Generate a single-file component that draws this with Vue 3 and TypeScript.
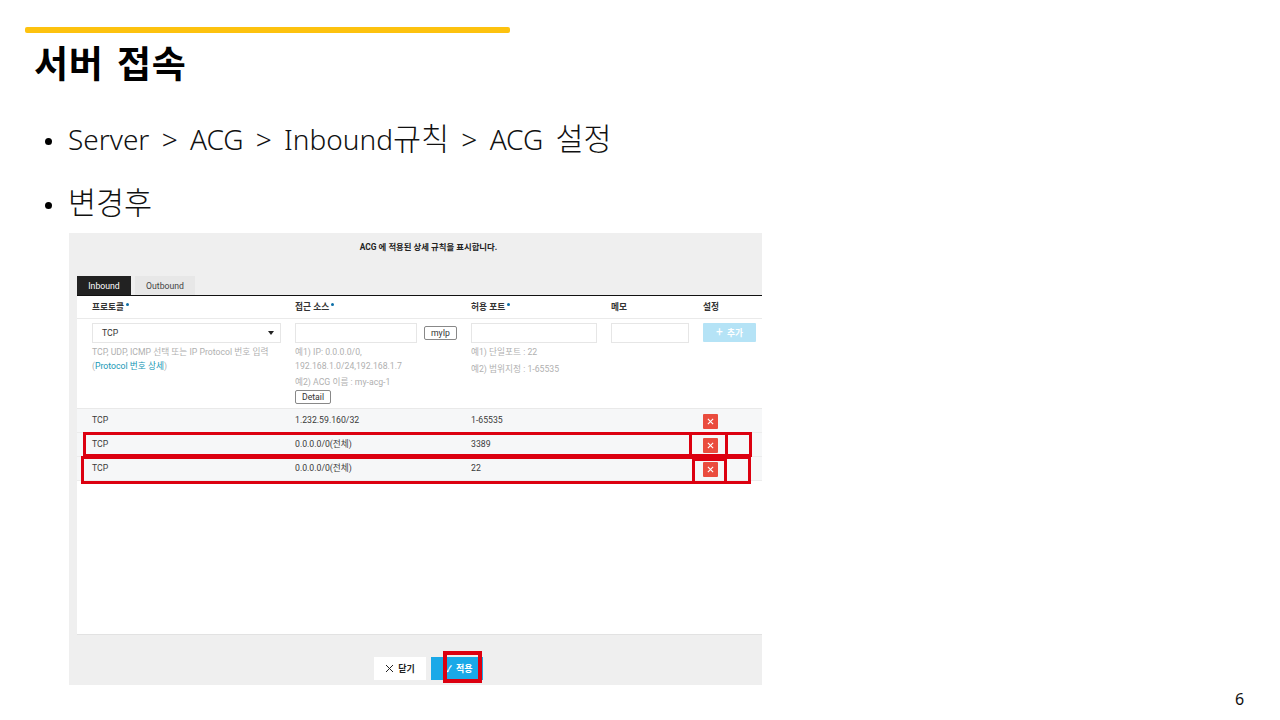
<script setup lang="ts">
interface Rule { proto: string; source: string; port: string }
const rules: Rule[] = [
  { proto: 'TCP', source: '1.232.59.160/32', port: '1-65535' },
  { proto: 'TCP', source: '0.0.0.0/0(전체)', port: '3389' },
  { proto: 'TCP', source: '0.0.0.0/0(전체)', port: '22' },
]
const marks = ['m1', 'm2', 'm3', 'm4', 'm5']
</script>

<template>
  <div class="slide">
    <div class="bar"></div>
    <h1 class="title">서버 접속</h1>
    <ul class="bullets">
      <li>Server &gt; ACG &gt; Inbound<span class="ko">규칙</span> &gt; ACG <span class="ko">설정</span></li>
      <li><span class="ko">변경후</span></li>
    </ul>
    <div class="shot">
      <div class="shot-head">ACG 에 적용된 상세 규칙을 표시합니다.</div>
      <div class="tabs">
        <div class="tab active">Inbound</div>
        <div class="tab">Outbound</div>
      </div>
      <div class="sheet">
        <div class="grid head-row">
          <div>프로토콜<i class="dot"></i></div>
          <div>접근 소스<i class="dot"></i></div>
          <div>허용 포트<i class="dot"></i></div>
          <div>메모</div>
          <div>설정</div>
        </div>
        <div class="grid form-row">
          <div>
            <div class="field select w188"><span>TCP</span><i class="caret"></i></div>
            <p class="hint first">TCP, UDP, ICMP 선택 또는 IP Protocol 번호 입력</p>
            <p class="hint">(<span class="link">Protocol 번호 상세</span>)</p>
          </div>
          <div>
            <div class="src-line">
              <div class="field w122"></div>
              <div class="mini">myIp</div>
            </div>
            <p class="hint first">예1) IP: 0.0.0.0/0,</p>
            <p class="hint">192.168.1.0/24,192.168.1.7</p>
            <p class="hint gap">예2) ACG 이름 : my-acg-1</p>
            <div class="mini detail">Detail</div>
          </div>
          <div>
            <div class="field w126"></div>
            <p class="hint first">예1) 단일포트 : 22</p>
            <p class="hint wide">예2) 범위지정 : 1-65535</p>
          </div>
          <div><div class="field w78"></div></div>
          <div><div class="add"><span class="plus">+</span> 추가</div></div>
        </div>
        <div v-for="(r, i) in rules" :key="i" class="grid rule-row">
          <div>{{ r.proto }}</div>
          <div>{{ r.source }}</div>
          <div>{{ r.port }}</div>
          <div></div>
          <div>
            <span class="del">
              <svg viewBox="0 0 8 8" width="7" height="7"><path d="M1 1l6 6M7 1l-6 6" stroke="#fff" stroke-width="1.3" fill="none" /></svg>
            </span>
          </div>
        </div>
      </div>
      <div class="foot">
        <div class="btn close">
          <svg viewBox="0 0 9 9" width="9" height="9"><path d="M1 1l7 7M8 1l-7 7" stroke="#222" stroke-width="1" fill="none" /></svg>
          닫기
        </div>
        <div class="btn apply">✓ 적용</div>
      </div>
      <div v-for="m in marks" :key="m" class="mark" :class="m"></div>
    </div>
    <div class="page">6</div>
  </div>
</template>

<style>
html, body { margin: 0; background: #fff; }
</style>

<style scoped>
.slide {
  width: 1280px;
  height: 720px;
  box-sizing: border-box;
  padding: 27px 0 0 25px;
  background: #fff;
  position: relative;
  overflow: hidden;
  font-family: "Noto Sans", "Noto Sans CJK KR", sans-serif;
  color: #000;
}
.bar { width: 485px; height: 6px; background: #fdc20f; border-radius: 2px; }
.title {
  margin: 4px 0 0 9px;
  font: 700 37px/50px "Noto Sans CJK KR", sans-serif;
  letter-spacing: 0.8px;
  word-spacing: 4px;
}
.bullets { list-style: none; margin: 31px 0 0 19px; padding: 0; }
.bullets li {
  position: relative;
  padding-left: 24px;
  font-size: 28px;
  line-height: 40px;
  height: 64px;
  word-spacing: 5px;
  font-weight: 300;
  color: #111;
}
.ko { font-size: 30.5px; word-spacing: 0; }
.bullets li::before {
  content: "";
  position: absolute;
  left: 1px;
  top: 20px;
  width: 7px;
  height: 7px;
  border-radius: 50%;
  background: #000;
}

.shot {
  position: absolute;
  left: 69px;
  top: 233px;
  width: 693px;
  height: 452px;
  background: #efefef;
  font-family: Roboto, "Noto Sans CJK KR", sans-serif;
  font-size: 8.7px;
  color: #3a3a3a;
  display: flex;
  flex-direction: column;
}
.shot-head {
  text-align: center;
  font-weight: 700;
  font-size: 8.4px;
  line-height: 12px;
  padding: 8px 0 0 26px;
  height: 35px;
  color: #222;
}
.tabs { display: flex; gap: 4px; padding-left: 8px; height: 19px; }
.tab {
  width: 60px;
  height: 19px;
  background: #e7e7e7;
  text-align: center;
  line-height: 20px;
  color: #444;
}
.tab.active { width: 54px; background: #222; color: #fff; }
.sheet {
  margin-left: 8px;
  height: 338px;
  background: #fff;
  border-top: 1px solid #111;
  border-bottom: 1px solid #e2e2e2;
}
.grid { display: grid; grid-template-columns: 218px 176px 140px 92px 59px; }
.grid > div:first-child { padding-left: 15px; }
.head-row {
  height: 22px;
  line-height: 22px;
  font-weight: 700;
  color: #333;
  border-bottom: 1px solid #eaeaea;
}
.dot {
  display: inline-block;
  width: 3px;
  height: 3px;
  margin: 0 0 6px 2px;
  border-radius: 50%;
  background: #0b6fa8;
  vertical-align: middle;
}
.form-row { padding-top: 4px; height: 85px; border-bottom: 1px solid #e9e9e9; }
.field {
  box-sizing: border-box;
  height: 20px;
  background: #fff;
  border: 1px solid #e6e6e6;
}
.w188 { width: 189px; }
.w122 { width: 122px; }
.w126 { width: 126px; }
.w78 { width: 78px; }
.select {
  display: flex;
  align-items: center;
  justify-content: space-between;
  padding: 0 6px 0 9px;
  color: #333;
}
.caret {
  width: 0;
  height: 0;
  border-left: 3px solid transparent;
  border-right: 3px solid transparent;
  border-top: 4px solid #222;
}
.src-line { display: flex; gap: 7px; align-items: center; height: 20px; }
.mini {
  box-sizing: border-box;
  width: 33px;
  height: 14px;
  border: 1px solid #888;
  border-radius: 2px;
  background: #fff;
  text-align: center;
  line-height: 12px;
  color: #333;
}
.detail { width: 36px; }
.hint { margin: 0; line-height: 13.5px; color: #b0b0b0; white-space: nowrap; }
.hint.first { margin-top: 3px; }
.hint.gap { margin-top: 3px; }
.hint.wide { margin-top: 3px; }
.link { color: #1597b5; font-weight: 400; }
.add {
  box-sizing: border-box;
  width: 53px;
  height: 19px;
  background: #b5e3f6;
  border-radius: 1px;
  color: #fff;
  font-weight: 700;
  text-align: center;
  line-height: 19px;
}
.plus { font-size: 12px; font-weight: 400; margin-right: 2px; }
.rule-row {
  height: 24px;
  padding-bottom: 2px;
  align-items: center;
  background: #f6f7f8;
  border-bottom: 1px solid #ececec;
  box-sizing: border-box;
}
.del {
  display: flex;
  align-items: center;
  justify-content: center;
  width: 15px;
  height: 15px;
  margin-top: 4px;
  border-radius: 1px;
  background: #ea4c3e;
}
.foot { display: flex; justify-content: center; gap: 5px; padding: 22px 0 0 26px; }
.btn {
  box-sizing: border-box;
  width: 52px;
  height: 23px;
  display: flex;
  align-items: center;
  justify-content: center;
  gap: 4px;
  font-weight: 700;
  font-size: 9px;
}
.close { background: #fff; color: #222; }
.apply { background: #1aa9e8; color: #fff; padding-left: 4px; word-spacing: 2px; }
.mark { position: absolute; box-sizing: border-box; border: 3px solid #dc0010; pointer-events: none; }
.m1 { left: 14px; top: 199px; width: 669px; height: 25px; }
.m2 { left: 12px; top: 223px; width: 670px; height: 28px; }
.m3 { left: 620px; top: 199px; width: 39px; height: 25px; }
.m4 { left: 623px; top: 225px; width: 35px; height: 26px; }
.m5 { left: 374px; top: 418px; width: 39px; height: 32px; border-width: 4px; }
.page { position: absolute; left: 1235px; top: 689px; font-size: 16px; line-height: 20px; color: #111; }
</style>
